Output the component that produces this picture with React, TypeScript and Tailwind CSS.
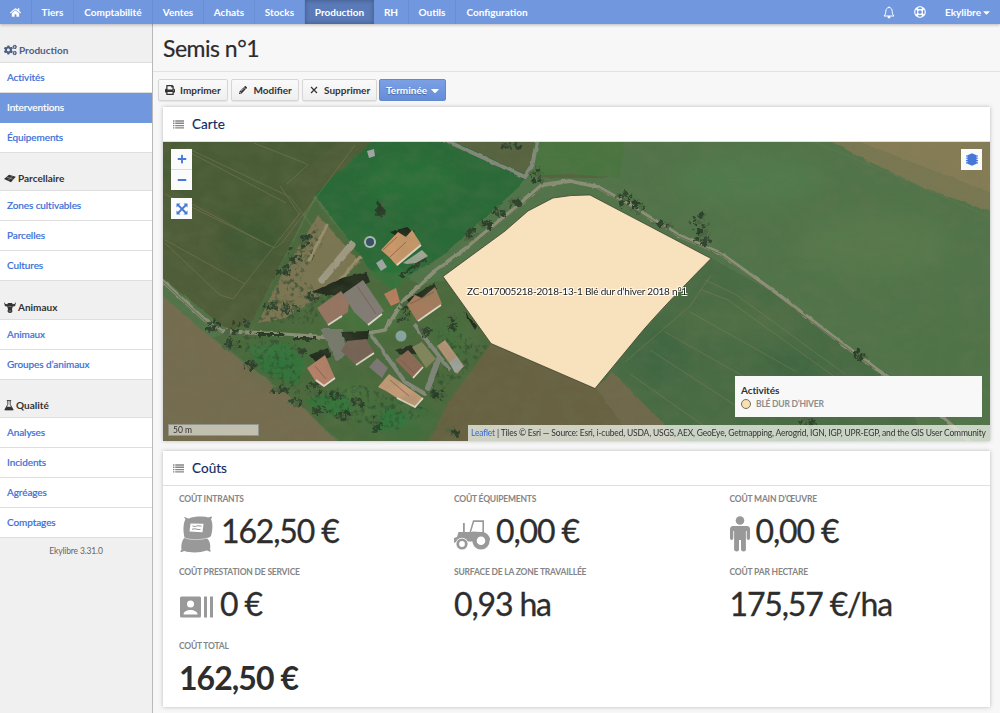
import React from "react";
import { FaHome, FaCogs, FaPrint, FaPencilAlt, FaCaretDown, FaRegLifeRing, FaPlus, FaMinus } from "react-icons/fa";

const navItems = [
  { label: "Tiers", cls: "w-[42px]" },
  { label: "Comptabilité", cls: "w-[79px]" },
  { label: "Ventes", cls: "w-[51px]" },
  { label: "Achats", cls: "w-[51px]" },
  { label: "Stocks", cls: "w-[50px]" },
  { label: "Production", cls: "w-[69px]", active: true },
  { label: "RH", cls: "w-[35px]" },
  { label: "Outils", cls: "w-[47px]" },
  { label: "Configuration", cls: "w-[82px]" },
];

function ParcelIcon() {
  return (
    <svg viewBox="0 0 12 9" className="h-[9px] w-3" fill="currentColor">
      <path d="M0 5 5 .8l6.800 2L7 8.300z" />
      <path d="M2.500 3 9.500 5.300M4 6.500l4.500-4.500" stroke="#efefef" strokeWidth=".4" />
    </svg>
  );
}

function CowIcon() {
  return (
    <svg viewBox="0 0 12 12" className="h-3 w-3" fill="currentColor">
      <path d="M.3.6C0 2 .6 2.900 2 3l1.300.2L4 2h4l.7 1.200L10 3c1.400-.1 2-1 1.700-2.400.8 1.800.2 3-1 3.400l1 .3-1.500 1.200-1.300-.2L8 8l.4 2c0 1.200-.9 2-2.400 2s-2.400-.8-2.400-2L4 8 3.100 5.300l-1.300.2L.3 4.300l1-.3C.1 3.600-.5 2.400.3.600z" />
      <path d="M4.700 5.500h.8M6.500 5.500h.8M4.800 10h.8M6.400 10h.8" stroke="#efefef" strokeWidth=".7" />
    </svg>
  );
}

function FlaskIcon() {
  return (
    <svg viewBox="0 0 10 11" className="h-[11px] w-[10px]" fill="none" stroke="currentColor">
      <path d="M2.800.6h4.400M3.800.6v3.800L.8 9.900h8.400l-3-5.500V.6" strokeWidth=".9" />
      <path d="M2.600 6.800h4.800l1.800 3.300H.8z" fill="currentColor" stroke="none" />
    </svg>
  );
}

const sections = [
  { title: "Production", icon: <FaCogs className="h-3 w-[13px]" />, color: "text-[#4d5f85]", items: ["Activités", "Interventions", "Équipements"] },
  { title: "Parcellaire", icon: <ParcelIcon />, color: "text-[#333]", items: ["Zones cultivables", "Parcelles", "Cultures"] },
  { title: "Animaux", icon: <CowIcon />, color: "text-[#333]", items: ["Animaux", "Groupes d’animaux"] },
  { title: "Qualité", icon: <FlaskIcon />, color: "text-[#333]", items: ["Analyses", "Incidents", "Agréages", "Comptages"] },
];

function BellIcon() {
  return (
    <svg viewBox="0 0 12 13" className="h-[13px] w-3" fill="none" stroke="currentColor" strokeWidth="1">
      <path d="M6 .5v1M1 10h10C9.500 8.500 9.300 7.500 9.200 5.500 9.100 3 8 1.500 6 1.500S2.900 3 2.800 5.500C2.700 7.500 2.500 8.500 1 10z" />
      <path d="M5 10.500h2v.7c0 .5-.4.9-1 .9s-1-.4-1-.9z" fill="currentColor" />
    </svg>
  );
}

function NavBar() {
  return (
    <header className="relative z-10 flex h-6 shrink-0 bg-[#7197de] text-[10px] font-bold text-white shadow-[0_1px_3px_rgba(0,0,0,0.25)]">
      <a className="flex w-8 items-center justify-center border-r border-[#6a8fd5]"><FaHome className="size-[11px]" /></a>
      {navItems.map((n) => (
        <a key={n.label} className={`${n.cls} flex items-center justify-center ${n.active ? "bg-[#5a7ab8] shadow-[inset_0_0_5px_rgba(0,0,0,0.3)]" : "border-r border-[#6a8fd5] last-of-type:border-0"}`}>
          {n.label}
        </a>
      ))}
      <div className="ml-auto flex items-center pr-[10px]">
        <BellIcon />
        <FaRegLifeRing className="ml-[19px] mr-[19px] size-[12px]" />
        <span>Ekylibre</span>
        <FaCaretDown className="ml-[2px] h-[11px] w-[7px]" />
      </div>
    </header>
  );
}

function Sidebar() {
  return (
    <aside className="w-[153px] shrink-0 border-r border-[#b9b9b9] bg-[#f0f0f0] text-[10px]">
      {sections.map((s) => (
        <section key={s.title}>
          <h2 className={`flex h-[38.5px] items-end gap-[2px] border-b border-[#dedede] pb-[5px] pl-1 font-bold ${s.color}`}>
            <span className="flex h-[14px] items-center">{s.icon}</span>
            <span className="leading-[14px]">{s.title}</span>
          </h2>
          {s.items.map((item) => (
            <a
              key={item}
              className={`flex h-[30px] items-center border-b pl-[7px] font-medium tracking-[-0.1px] [-webkit-text-stroke:0.15px_currentColor] ${item === "Interventions" ? "border-[#7197de] bg-[#7197de] text-white" : "border-[#dedede] bg-white text-[#3a6fd8]"}`}
            >
              {item}
            </a>
          ))}
        </section>
      ))}
      <p className="pt-[7px] text-center text-[8.500px] leading-[13px] tracking-[-0.15px] text-[#666]">Ekylibre 3.31.0</p>
    </aside>
  );
}

function Button({ icon, children, cls }: { icon: React.ReactNode; children: React.ReactNode; cls: string }) {
  return (
    <button className={`flex h-[22px] items-center rounded-[2px] border border-[#d6d6d6] bg-linear-to-b from-[#fafafa] to-[#efefef] font-bold text-[#333] shadow-[0_1px_1px_rgba(0,0,0,0.08)] ${cls}`}>
      {icon}
      {children}
    </button>
  );
}

function ListIcon() {
  return (
    <svg viewBox="0 0 11 9" className="mt-px h-[9px] w-[11px]" stroke="#858585" strokeWidth="1.400">
      <path d="M0 1h1.400M2.200 1H11M0 3.300h1.400M2.200 3.300H11M0 5.600h1.400M2.200 5.600H11M0 7.900h1.400M2.200 7.900H11" />
    </svg>
  );
}

function PanelTitle({ children }: { children: React.ReactNode }) {
  return (
    <h2 className="flex h-[35px] shrink-0 items-center gap-2 border-b border-[#e0e0e0] pl-[10px] text-[13.500px] tracking-[0.05px] text-[#0f2a5f] [-webkit-text-stroke:0.15px_currentColor]">
      <ListIcon />
      {children}
    </h2>
  );
}

const houses: { points: string; color: string }[] = [
  { points: "381,250 398,232 406,237 412,230 421,244 397,266 390,258", color: "#c99769" },
  { points: "317,308 341,291 349,302 348,312 328,325", color: "#967462" },
  { points: "343,294 363,280 384,311 368,325 354,312", color: "#827b74" },
  { points: "384,294 396,288 400,302 391,306", color: "#b87f5e" },
  { points: "407,305 415,295 422,298 435,287 442,304 417,321", color: "#a47b5d" },
  { points: "341,351 347,341 366,339 374,352 356,365", color: "#766354" },
  { points: "307,368 325,355 335,378 324,387 316,382", color: "#b58068" },
  { points: "369,367 377,358 388,368 382,378", color: "#7d7776" },
  { points: "395,360 408,350 423,366 413,378", color: "#8c6a55" },
  { points: "378,387 389,374 423,398 415,408 397,398 386,391", color: "#c49a78" },
  { points: "437,346 445,340 464,366 457,374", color: "#b59377" },
];

const trees: [number, number, number, number][] = [
  [239, 329, 14, 9], [213, 326, 6, 6], [296, 255, 9, 8], [284, 269, 7, 6], [305, 240, 6, 6],
  [471, 234, 6, 6], [538, 176, 8, 8], [381, 210, 5, 7], [404, 313, 7, 9], [313, 389, 9, 7],
  [344, 417, 9, 6], [377, 424, 8, 8], [452, 322, 5, 8], [624, 198, 9, 6], [638, 207, 7, 7],
  [700, 224, 11, 10], [704, 238, 9, 6], [250, 365, 8, 5], [295, 402, 7, 5], [320, 412, 9, 5],
  [859, 355, 7, 4], [808, 421, 9, 5], [454, 432, 6, 3], [232, 345, 9, 6],
  [665, 225, 8, 4], [500, 212, 8, 4], [515, 203, 6, 4], [486, 224, 6, 4], [290, 310, 9, 7],
  [315, 297, 8, 6], [270, 305, 6, 5], [425, 332, 5, 6], [357, 402, 6, 5], [440, 395, 8, 5],
  [337, 395, 7, 5], [280, 390, 8, 4], [300, 352, 5, 4], [510, 146, 8, 4],
];

const leaves = trees.flatMap(([x, y, rx, ry], i) =>
  Array.from({ length: 11 }, (_, k) => {
    const a = (k * 137.5 + i * 41) * (Math.PI / 180);
    const d = Math.sqrt((k + 0.5) / 11);
    return { x: x + Math.cos(a) * d * rx, y: y + Math.sin(a) * d * ry, r: 1 + ((k * 7 + i) % 4) * 0.5, light: (k + i) % 3 === 0 };
  })
);

function Satellite() {
  return (
    <svg viewBox="163 142 827 299" preserveAspectRatio="none" className="block h-full w-full">
      <defs>
        <filter id="grain" x="0" y="0" width="100%" height="100%">
          <feTurbulence type="fractalNoise" baseFrequency=".05 .07" numOctaves="5" seed="8" />
          <feColorMatrix values="0 0 0 0 .16  0 0 0 0 .2  0 0 0 0 .1  .9 .9 0 0 -.7" />
        </filter>
        <filter id="speckle" x="0" y="0" width="100%" height="100%">
          <feTurbulence type="fractalNoise" baseFrequency=".2" numOctaves="3" seed="4" />
          <feColorMatrix values="0 0 0 0 .03  0 0 0 0 .07  0 0 0 0 .03  4 0 0 0 -2" />
          <feComposite in2="SourceGraphic" operator="in" />
        </filter>
        <filter id="rough" x="-10%" y="-10%" width="120%" height="120%">
          <feTurbulence type="fractalNoise" baseFrequency=".25" numOctaves="3" seed="3" />
          <feDisplacementMap in="SourceGraphic" scale="7" xChannelSelector="R" yChannelSelector="G" />
          <feGaussianBlur stdDeviation=".7" />
        </filter>
        <filter id="edge" x="-5%" y="-5%" width="110%" height="110%">
          <feTurbulence type="fractalNoise" baseFrequency=".12" numOctaves="2" seed="6" />
          <feDisplacementMap in="SourceGraphic" scale="3" xChannelSelector="R" yChannelSelector="G" />
          <feGaussianBlur stdDeviation=".7" />
        </filter>
        <filter id="soft"><feGaussianBlur stdDeviation=".6" /></filter>
        <filter id="haze"><feGaussianBlur stdDeviation="10" /></filter>
      </defs>
      <rect x="163" y="142" width="827" height="299" fill="#52744a" />
      <g filter="url(#edge)">
        <path d="M150 130H385L315 195 253 320 230 332 150 268z" fill="#4f5d38" />
        <path d="M175 142 350 130 290 184 302 205 276 248 150 175z" fill="#485c35" />
        <path d="M150 284C190 320 218 345 250 366L300 405 345 450H150z" fill="#766c50" />
        <path d="M253 320 315 200 352 245 420 285 450 280 492 344 455 395 430 450H348L300 405 214 338z" fill="#4c6a3d" />
        <path d="M385 130H440L527 172 519 187 442 256 410 275 370 270 315 194z" fill="#2c6a38" />
        <path d="M430 130H625L608 178 545 178 527 175z" fill="#586441" />
        <path d="M535 130H625L620 178 570 174 530 176z" fill="#48743f" />
        <path d="M491 344 596 388 690 450H425L447 404z" fill="#686243" />
        <path d="M711 258 795 305 850 350 895 378 930 450H665L596 388 635 340z" fill="#486c44" />
        <path d="M596 388 612 372 690 450H640z" fill="#70694b" />
        <path d="M810 130H1010V219L920 186 862 158z" fill="#7a7852" />
        <path d="M850 138 1010 200V130z" fill="#867d57" />
        <path d="M318 215 360 262 330 290 285 318 258 323 281 276z" fill="#7c7653" />
      </g>
      <g filter="url(#haze)" opacity=".4">
        <ellipse cx="410" cy="180" rx="48" ry="24" fill="#2c7a3b" />
        <ellipse cx="750" cy="180" rx="75" ry="24" fill="#4f8550" />
        <ellipse cx="875" cy="245" rx="75" ry="30" fill="#5f8250" />
        <ellipse cx="940" cy="350" rx="45" ry="30" fill="#4c7242" />
        <ellipse cx="660" cy="355" rx="25" ry="30" fill="#30603c" />
        <ellipse cx="740" cy="320" rx="65" ry="14" fill="#5f774a" />
        <ellipse cx="790" cy="365" rx="35" ry="12" fill="#2f5f3a" />
        <ellipse cx="250" cy="244" rx="34" ry="30" fill="#315633" />
        <ellipse cx="280" cy="360" rx="28" ry="14" fill="#1f7a3a" />
        <ellipse cx="400" cy="420" rx="34" ry="14" fill="#247a3b" />
        <ellipse cx="350" cy="400" rx="22" ry="16" fill="#3f8840" />
        <ellipse cx="370" cy="316" rx="40" ry="14" fill="#3f873f" />
        <ellipse cx="450" cy="340" rx="18" ry="22" fill="#3c7a3d" />
      </g>
      <path d="M247 345 285 343 305 358 298 385 265 372zM305 400 345 390 352 410 325 418zM387 408 410 415 402 428 372 432zM385 255 410 275 395 290 370 275z" fill="#2c7a3a" opacity=".6" filter="url(#edge)" />
      <path d="M314 222 325 240 300 280 345 300 310 325 255 322 282 276zM235 332 300 345 300 400 250 362zM305 392 360 385 430 410 400 430 330 418zM440 325 490 345 455 385 425 400z" fill="#fff" filter="url(#speckle)" opacity=".7" />
      <g fill="none" stroke="#8b8459" strokeWidth=".8" opacity=".55" filter="url(#soft)">
        <path d="M187 148 290 197 312 226M189 152 286 203M254 143 307 164M165 194 275 248 282 243 355 145M190 203 270 246M165 240 245 284M165 243 220 295 233 299 300 213M287 184 309 164M280 186 300 215" />
        <path d="M711 275 690 306 625 362M705 280 735 294 845 374M702 290 728 300 835 377M665 332 750 380M650 350 735 405M630 374 710 430M690 312 795 371" />
        <path d="M815 142 905 180 990 217M870 160 985 204M900 145 990 180" opacity=".5" />
      </g>
      <g fill="none" strokeLinecap="round" strokeLinejoin="round" filter="url(#edge)">
        <path d="M155 274 205 320 222 331 275 334 340 338 385 330 404 300 436 270 470 245 520 204 542 185 570 181 598 187 630 205 680 236 720 253 775 292 835 338 875 368 925 402 980 450" stroke="#8d9079" strokeWidth="3.800" />
        <path d="M372 336 405 382 425 394M415 325 449 369M445 140 525 177 532 166 537 142" stroke="#84897b" strokeWidth="4" />
        <path d="M322 330h20l3 25-8 5z" stroke="#777a6d" strokeWidth="2" fill="#777a6d" />
        <path d="M322 280 352 244" stroke="#a09a84" strokeWidth="7" />
        <path d="M309 260 327 225M336 284 360 257" stroke="#9a8f6d" strokeWidth="3" />
        <path d="M428 388 438 360" stroke="#808579" strokeWidth="6" />
      </g>
      <path d="M163 282 205 321 222 332M470 247 520 206 542 187M598 188 680 237 720 254 835 339 875 369" stroke="#5b6645" strokeWidth=".9" fill="none" />
      <g filter="url(#rough)" fill="#293b27">
        {leaves.map((l, i) => (
          <circle key={i} cx={l.x} cy={l.y} r={l.r} fill={l.light ? "#4a6340" : "#2c3f2a"} />
        ))}
        <path d="M255 333h28l2 3h-26zM294 337h22v3h-22zM378 199l7 14-10 3zM398 276l24-18 4 2-25 18z" />
      </g>
      <g filter="url(#edge)" fill="#20291f">
        <path d="M312 292l30-14 24-6 4 10-33 15zM341 332l28-1-1 8-20 6zM407 300l27-17 3 6-26 16zM309 355l19-7 3 9-16 5zM390 232l17-5 8 4-14 8zM395 350l16-5 6 8-14 3z" />
        <path d="M463 310l14 16-2 4z" />
      </g>
      <g filter="url(#soft)">
        {houses.map((h) => (
          <polygon key={h.points} points={h.points} fill={h.color} />
        ))}
        <path d="M397 265l24-20M418 321l23-16M356 365l18-12M316 380l8 6 11-8M413 378l10-11M397 398l18 9 8-9M368 325l14-11M328 325l14-9" stroke="#e2d9ca" strokeWidth="1.800" fill="none" />
        <path d="M383 250l14-13M390 257l16-15M410 304l24-12M315 366l11 13M401 360l13 13M390 380l19 16M357 286l19 28" stroke="#795a45" strokeWidth="1" opacity=".7" />
        <path d="M403 263l19-13 6 6-12 7-9 1z" fill="#a0a896" />
        <circle cx="370" cy="242" r="6" fill="#b2c4bf" /><circle cx="370" cy="242" r="4" fill="#304a66" />
        <circle cx="401" cy="336" r="5.500" fill="#86a59f" />
        <path d="M367 151l7-2 1 7-6 2zM376 263l6-4 5 8-6 4zM449 362l8-5 6 10-8 6z" fill="#9fa5a0" />
        <path d="M412 347l10-5 14 17-10 9z" fill="#83865c" />
      </g>
      <rect x="163" y="142" width="827" height="299" filter="url(#grain)" opacity=".3" />
      <path d="M443 276.500 505 231 528 211 553 198Q571 194.500 590 195L711 258.500Q655 315 635 340L595 388.500 491 343.500z" fill="#f8e2bd" stroke="#3f4030" strokeWidth=".8" />
    </svg>
  );
}

const mapButton = "flex items-center justify-center bg-[#fbfbfb] text-[#4678d8]";

function MapPanel() {
  return (
    <section className="flex h-[334px] flex-col bg-white shadow-[0_0_4px_rgba(0,0,0,0.25)]">
      <PanelTitle>Carte</PanelTitle>
      <div className="relative h-[299px] overflow-hidden">
        <Satellite />
        <div className="absolute left-2 top-[7px] w-[21px]">
          <div className={`${mapButton} h-[21px] border-b border-[#ddd]`}><FaPlus className="size-[10px]" /></div>
          <div className={`${mapButton} h-5`}><FaMinus className="size-[10px]" /></div>
          <div className={`${mapButton} mt-2 h-[21px]`}>
            <svg viewBox="0 0 12 12" className="size-3" fill="currentColor">
              <path d="M.5.5h4L.5 4.500zM11.500.5v4l-4-4zM.5 11.500v-4l4 4zM11.500 11.500h-4l4-4z" />
              <path d="M2 2l8 8M10 2l-8 8" stroke="currentColor" strokeWidth="1.800" />
            </svg>
          </div>
        </div>
        <div className={`${mapButton} absolute right-2 top-[7px] size-[21px]`}>
          <svg viewBox="0 0 12 13" className="h-[13px] w-3" fill="currentColor">
            <path d="M6 .3 10.500 2.200v8.600L6 12.700 1.500 10.800V2.200z" />
            <path d="M0 3h12M0 5.300h12M0 7.600h12M0 9.900h12" stroke="currentColor" strokeWidth="1.100" />
          </svg>
        </div>
        <span className="absolute left-[304px] top-[142px] whitespace-nowrap text-[10px] leading-[14px] tracking-[-0.21px] text-[#222] [text-shadow:1px_1px_0_#fff,-1px_1px_0_#fff,1px_-1px_0_#fff,-1px_-1px_0_#fff]">
          ZC-017005218-2018-13-1 Blé dur d’hiver 2018 n°1
        </span>
        <div className="absolute left-[5px] top-[282px] flex h-3 w-[91px] items-center border border-[#91958b] bg-[#cfcebf]/85 pl-1 pt-px text-[8.500px] leading-none text-[#333]">50 m</div>
        <div className="absolute right-2 top-[234px] h-[41px] w-[247px] bg-[#f8f8f8] pl-[6px] pt-[7px]">
          <div className="text-[10px] font-bold leading-[14px] tracking-[-0.1px] text-[#333]">Activités</div>
          <div className="flex items-center gap-[5px] text-[8.500px] font-bold leading-[14px] tracking-[-0.22px] text-[#8c8c8c]">
            <span className="size-[10px] rounded-full border border-[#77705f] bg-[#f8dfb4]" />
            BLÉ DUR D’HIVER
          </div>
        </div>
        <div className="absolute bottom-0 right-0 flex h-4 w-[522px] items-center whitespace-pre bg-[#e9eee5]/80 pl-[3px] text-[8.500px] tracking-[-0.178px] text-[#333]">
          <a className="text-[#3569d7]">Leaflet</a> | Tiles © Esri — Source: Esri, i-cubed, USDA, USGS, AEX, GeoEye, Getmapping, Aerogrid, IGN, IGP, UPR-EGP, and the GIS User Community
        </div>
      </div>
    </section>
  );
}

function SackIcon() {
  return (
    <svg viewBox="0 0 34 37" className="ml-px mr-[7px] mt-[7px] h-[37px] w-[34px]" fill="#999">
      <path d="M5.500 3C4 2 4 .8 5 1c1.500.5 2 1.500 4 1.400C14 0 25 0 28 1.500l3.500-1c1 .7.300 1.500-.5 2.500 2 4 1.800 11 0 17-1.500 1.500-3 2-4.500 2 3 2 4.500 7 3.500 11.500.8 1 1 2.200 0 2.300-1.200 0-1.800-1.200-3.300-1.200C20 37 10 37 4.500 35 3 35 2 36.500.8 36c-.8-.5 0-1.500.7-2.500C1 30 1.500 25 4.500 21.500 3 15 3 8 5.500 3z" />
      <path d="M4 21.500c6 3 17 2.500 23.500.5" stroke="#ddd" strokeWidth=".8" fill="none" />
      <path d="M10.500 7.500l13 .2-1 8.600-13-.8z" fill="#fff" />
      <path d="M12.500 10l3 .5 2-.8 4 .5M12 13.200l3-.4 2 .5 3.500.3" stroke="#888" strokeWidth=".9" fill="none" />
    </svg>
  );
}

function TractorIcon() {
  return (
    <svg viewBox="0 0 36 30" className="mr-[6px] mt-[7px] h-[30px] w-9" fill="#999">
      <path d="M9 3h1.800v10H9zM15.500 12 19 .3h11V13h-1.600V2h-8.300l-3 10z" />
      <path d="M4.500 12h13l1.500-.5L27 12c5 0 9 3.500 9 8h-9l-8.500 1.500H3L0 23v-5l3-1z" />
      <circle cx="27" cy="20.800" r="8.700" />
      <circle cx="8" cy="24" r="6.300" fill="#fff" />
      <circle cx="8" cy="24" r="5.600" />
      <circle cx="27" cy="20.800" r="4.300" fill="#fff" />
      <circle cx="8" cy="24" r="2.900" fill="#fff" />
    </svg>
  );
}

function PersonIcon() {
  return (
    <svg viewBox="0 0 20 36" className="mr-[6px] mt-[6px] h-9 w-5" fill="#999">
      <circle cx="10" cy="4.500" r="4.300" />
      <path d="M3 10h14c2 0 3 1.500 3 3v9c0 1.200-.7 2-1.600 2s-1.700-.8-1.700-2v-7h-.8v18.500c0 1.300-.8 2-2.200 2s-2.700-.7-2.700-2V24h-2v9.500c0 1.300-.8 2-2.200 2s-2.700-.7-2.700-2V15h-.8v7c0 1.200-.8 2-1.700 2S0 23.200 0 22v-9c0-1.500 1-3 3-3z" />
    </svg>
  );
}

function BadgeIcon() {
  return (
    <svg viewBox="0 0 34 22" className="ml-[1px] mr-[6px] mt-[5px] h-[22px] w-[34px]" fill="#999">
      <rect y=".5" width="21" height="21" rx="1.500" />
      <path d="M24 .5h3v21h-3zM30 .5h3v21h-3z" />
      <circle cx="10.500" cy="8" r="3.500" fill="#fff" />
      <path d="M3.500 18.500c0-6 14-6 14 0z" fill="#fff" />
    </svg>
  );
}

const costs = [
  { label: "COÛT INTRANTS", value: "162,50 €", icon: <SackIcon /> },
  { label: "COÛT ÉQUIPEMENTS", value: "0,00 €", icon: <TractorIcon /> },
  { label: "COÛT MAIN D’ŒUVRE", value: "0,00 €", icon: <PersonIcon /> },
  { label: "COÛT PRESTATION DE SERVICE", value: "0 €", icon: <BadgeIcon /> },
  { label: "SURFACE DE LA ZONE TRAVAILLÉE", value: "0,93 ha" },
  { label: "COÛT PAR HECTARE", value: "175,57 €/ha" },
  { label: "COÛT TOTAL", value: "162,50 €", bold: true },
];

function CostPanel() {
  return (
    <section className="mt-[10px] h-[256px] bg-white shadow-[0_0_4px_rgba(0,0,0,0.25)]">
      <PanelTitle>Coûts</PanelTitle>
      <div className="grid auto-rows-[73.300px] grid-cols-[275px_275.500px_1fr] pl-4 pt-[7px]">
        {costs.map((c) => (
          <div key={c.label}>
            <div className="text-[8.500px] font-bold leading-[12px] tracking-[-0.2px] text-[#858585]">{c.label}</div>
            <div className={`flex h-[52px] items-center whitespace-nowrap text-[32px] text-[#2d2d2d] ${c.bold ? "font-bold tracking-[-0.95px]" : "tracking-[-1.150px] [-webkit-text-stroke:0.3px_currentColor]"}`}>
              {c.icon}
              {c.value}
            </div>
          </div>
        ))}
      </div>
    </section>
  );
}

export default function App() {
  return (
    <div className="flex h-[713px] w-[1000px] flex-col overflow-hidden bg-[#f7f7f7] font-['Lato',sans-serif]">
      <NavBar />
      <div className="flex min-h-0 flex-1">
        <Sidebar />
        <main className="min-w-0 flex-1">
          <h1 className="flex h-12 items-center border-b border-[#e2e2e2] pl-[10px] pt-[2px] text-[23px] tracking-[-0.5px] text-[#2b2b2b] [-webkit-text-stroke:0.2px_currentColor]">Semis n°1</h1>
          <div className="flex h-[35px] gap-[3px] pl-[5px] pt-[7px] text-[10px]">
            <Button cls="w-[70px] pl-[6px]" icon={<FaPrint className="mr-[5px] size-[10px]" />}>Imprimer</Button>
            <Button cls="w-[67.500px] pl-[7px]" icon={<FaPencilAlt className="mr-[6.500px] size-[8px]" />}>Modifier</Button>
            <Button
              cls="w-[75.500px] pl-[7px]"
              icon={<svg viewBox="0 0 8 8" className="mr-[6.500px] size-[8px]" stroke="currentColor" strokeWidth="1.200"><path d="M1 1l6 6M7 1L1 7" /></svg>}
            >
              Supprimer
            </Button>
            <button className="-ml-px flex h-[22px] w-[67px] items-center rounded-[2px] border border-[#6388cf] bg-linear-to-b from-[#7ba0e4] to-[#658dd8] pl-[6px] font-bold text-white [text-shadow:0_1px_1px_rgba(0,0,0,0.3)]">
              Terminée
              <FaCaretDown className="ml-[4px] h-[13px] w-2" />
            </button>
          </div>
          <div className="pl-[10px] pr-[10px]">
            <MapPanel />
            <CostPanel />
          </div>
        </main>
      </div>
    </div>
  );
}
